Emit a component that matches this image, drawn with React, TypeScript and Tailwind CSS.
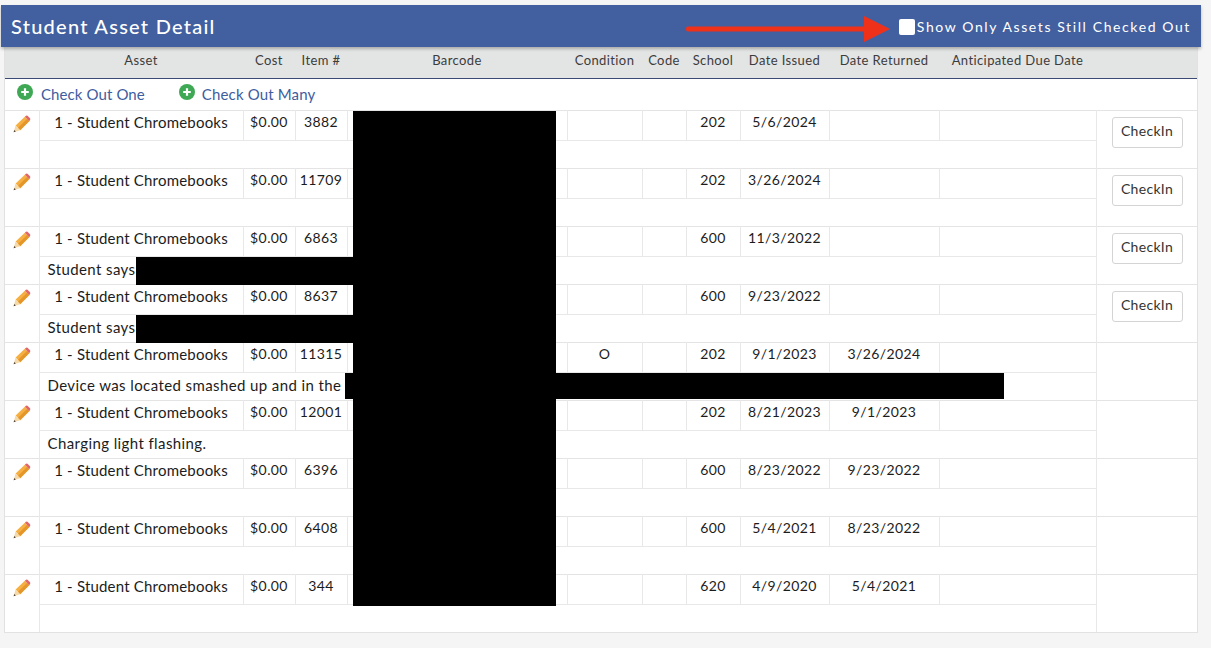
import React from 'react';

const rows = [
  { item: '3882', school: '202', issued: '5/6/2024', returned: '', note: '', open: true, cond: '' },
  { item: '11709', school: '202', issued: '3/26/2024', returned: '', note: '', open: true, cond: '' },
  { item: '6863', school: '600', issued: '11/3/2022', returned: '', note: 'Student says', open: true, cond: '' },
  { item: '8637', school: '600', issued: '9/23/2022', returned: '', note: 'Student says', open: true, cond: '' },
  { item: '11315', school: '202', issued: '9/1/2023', returned: '3/26/2024', note: 'Device was located smashed up and in the t', open: false, cond: 'O' },
  { item: '12001', school: '202', issued: '8/21/2023', returned: '9/1/2023', note: 'Charging light flashing.', open: false, cond: '' },
  { item: '6396', school: '600', issued: '8/23/2022', returned: '9/23/2022', note: '', open: false, cond: '' },
  { item: '6408', school: '600', issued: '5/4/2021', returned: '8/23/2022', note: '', open: false, cond: '' },
  { item: '344', school: '620', issued: '4/9/2020', returned: '5/4/2021', note: '', open: false, cond: '' },
];

const headers = ['Asset', 'Cost', 'Item #', 'Barcode', 'Condition', 'Code', 'School', 'Date Issued', 'Date Returned', 'Anticipated Due Date'];

function Pencil() {
  return (
    <svg width="18" height="18" viewBox="0 0 18 18" className="block">
      <path d="M2.6 10.6 L11.8 1.8 L16.2 6.2 L7.2 15.2 Z" fill="#f6b042" />
      <path d="M4.9 13 L14 4 L16.2 6.2 L7.2 15.2 Z" fill="#e5962a" />
      <path d="M11.8 1.8 L13 .7 Q13.8 .2 14.5 .8 L17 3.3 Q17.6 4 17.1 4.9 L16.2 6.2 Z" fill="#e0666a" />
      <path d="M2.6 10.6 L7.2 15.2 L.6 17.2 Z" fill="#f6d9a8" />
      <path d="M1.3 15 L2.8 16.5 L.6 17.2 Z" fill="#4a4038" />
    </svg>
  );
}

function PlusCircle() {
  return (
    <svg width="16" height="16" viewBox="0 0 16 16" className="block">
      <circle cx="8" cy="8" r="8" fill="#3fa854" />
      <path d="M8 4.2 V11.8 M4.2 8 H11.8" stroke="#fff" strokeWidth="2.2" />
    </svg>
  );
}

function RedArrow() {
  return (
    <svg width="204" height="26" viewBox="0 0 204 26" className="block">
      <rect x="0" y="10.5" width="182" height="5" rx="2" fill="#f0311a" />
      <path d="M178 0 L204 13 L178 26 Z" fill="#f0311a" />
    </svg>
  );
}

export default function App() {
  const cell = 'border-r border-b border-[#e8e8e8] pb-[6px] text-center text-[14px] leading-[20px] tracking-[0.4px]';
  return (
    <div className="min-h-screen bg-[#f5f5f5] pt-[5px] pl-px font-['Lato','Noto_Sans',sans-serif] text-[14px] text-[#1c1c1c]">
      {/* Title bar */}
      <div className="relative z-10 flex h-[42px] w-[1200px] items-center bg-[#425fa0] pl-[10px] pr-[10px] text-white shadow-[0_2px_3px_rgba(0,0,0,0.25)]">
        <h1 className="text-[20px] font-medium tracking-[1.25px]">Student Asset Detail</h1>
        <div className="ml-auto flex items-center">
          <div className="mr-[9px] mt-[5px]">
            <RedArrow />
          </div>
          <input type="checkbox" className="mt-[1px] h-[16px] w-[16px] appearance-none rounded-[2px] bg-white" />
          <label className="ml-[2px] text-[14px] tracking-[1.6px]">Show Only Assets Still Checked Out</label>
        </div>
      </div>

      {/* Panel */}
      <div className="relative ml-[3px] w-[1194px] border-x border-b border-[#e2e2e2] bg-white">
        {/* redactions over the table */}
        <div className="absolute top-[64px] left-[348px] h-[495px] w-[203px] bg-black" />
        <div className="absolute top-[210px] left-[131px] h-[28px] w-[217px] bg-black" />
        <div className="absolute top-[268px] left-[131px] h-[28px] w-[217px] bg-black" />
        <div className="absolute top-[326px] left-[340px] h-[26px] w-[659px] bg-black" />

        <table className="w-full table-fixed border-collapse">
          <colgroup>
            <col className="w-[34px]" />
            <col className="w-[204px]" />
            <col className="w-[52px]" />
            <col className="w-[52px]" />
            <col className="w-[220px]" />
            <col className="w-[75px]" />
            <col className="w-[44px]" />
            <col className="w-[54px]" />
            <col className="w-[89px]" />
            <col className="w-[110px]" />
            <col className="w-[157px]" />
            <col />
          </colgroup>
          <thead>
            <tr className="h-[31px] border-b border-[#3a4a75] bg-[#e3e4e4] text-[13px] tracking-[0.4px] text-[#3c3c3c]">
              <th />
              {headers.map(h => (
                <th key={h} className="whitespace-nowrap pb-[4px] text-center font-normal">{h}</th>
              ))}
              <th />
            </tr>
          </thead>
          <tbody>
            <tr className="h-[32px]">
              <td colSpan={12} className="pl-[12px]">
                <div className="flex items-center text-[15px] tracking-[0.1px] text-[#3d5da0]">
                  <a className="flex items-center">
                    <span className="-mt-[4px]"><PlusCircle /></span>
                    <span className="ml-[8px] mt-[1px]">Check Out One</span>
                  </a>
                  <a className="ml-[34px] flex items-center">
                    <span className="-mt-[4px]"><PlusCircle /></span>
                    <span className="ml-[7px] mt-[1px] tracking-[0.15px]">Check Out Many</span>
                  </a>
                </div>
              </td>
            </tr>
            {rows.map(r => (
              <React.Fragment key={r.item}>
                <tr className="h-[30px] border-t border-[#e4e4e4] text-[14px]">
                  <td rowSpan={2} className="border-r border-[#e8e8e8] pl-[8px] pt-[4px] align-top">
                    <Pencil />
                  </td>
                  <td className="border-r border-b border-[#e8e8e8] pb-[7px] text-center text-[15px] leading-[20px] tracking-[0.2px]">1 - Student Chromebooks</td>
                  <td className={cell}>$0.00</td>
                  <td className={cell}>{r.item}</td>
                  <td className={cell} />
                  <td className={cell}>{r.cond}</td>
                  <td className={cell} />
                  <td className={cell}>{r.school}</td>
                  <td className={cell}>{r.issued}</td>
                  <td className={cell}>{r.returned}</td>
                  <td className={cell} />
                  <td rowSpan={2} className="pl-[15px] pt-[6px] align-top">
                    {r.open && (
                      <button className="h-[31px] w-[71px] rounded-[3px] border border-[#d4d4d4] bg-white pb-[4px] text-[14px] tracking-[0.3px] text-[#333]">CheckIn</button>
                    )}
                  </td>
                </tr>
                <tr className="h-[28px]">
                  <td colSpan={10} className="whitespace-nowrap border-r border-[#e8e8e8] pb-[3px] pl-[8px] text-[15px] leading-[20px] tracking-[0.4px]">{r.note}</td>
                </tr>
              </React.Fragment>
            ))}
          </tbody>
        </table>
      </div>
    </div>
  );
}
